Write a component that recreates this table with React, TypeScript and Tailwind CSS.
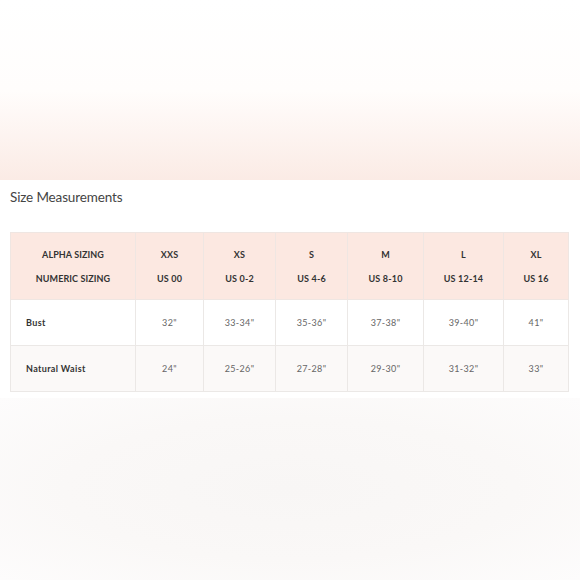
const sizes = [
  { alpha: 'XXS', numeric: 'US 00', bust: '32"', waist: '24"' },
  { alpha: 'XS', numeric: 'US 0-2', bust: '33-34"', waist: '25-26"' },
  { alpha: 'S', numeric: 'US 4-6', bust: '35-36"', waist: '27-28"' },
  { alpha: 'M', numeric: 'US 8-10', bust: '37-38"', waist: '29-30"' },
  { alpha: 'L', numeric: 'US 12-14', bust: '39-40"', waist: '31-32"' },
  { alpha: 'XL', numeric: 'US 16', bust: '41"', waist: '33"' },
];

const colWidths = ['w-[68px]', 'w-[72px]', 'w-[72px]', 'w-[76px]', 'w-[80px]', 'w-[65px]'];

export default function App() {
  return (
    <div className="w-[580px] h-[580px] bg-white font-['Lato','Liberation_Sans',sans-serif] overflow-hidden">
      {/* Soft pink band */}
      <div className="h-[180px] bg-gradient-to-b from-white via-[#fffdfc] to-[#fbebe5]" />

      {/* Size chart */}
      <section className="h-[218px] px-[10px] pt-[7px]">
        <h2 className="text-[13.5px] leading-5 text-[#444] font-normal tracking-[-0.01em]">Size Measurements</h2>

        <table className="mt-[25px] w-[558px] table-fixed border-collapse text-[9px] text-[#333]">
          <colgroup>
            <col className="w-[125px]" />
            {colWidths.map((w, i) => (
              <col key={i} className={w} />
            ))}
          </colgroup>
          <thead>
            <tr className="bg-[#fce8e1] h-[67px]">
              <th className="border border-[#efe6e2] font-bold tracking-[0.01em] align-middle pt-[2px]">
                <div className="leading-[24px]">ALPHA SIZING</div>
                <div className="leading-[24px]">NUMERIC SIZING</div>
              </th>
              {sizes.map((s) => (
                <th key={s.alpha} className="border border-[#efe6e2] font-bold tracking-[0.02em] align-middle pt-[2px]">
                  <div className="leading-[24px]">{s.alpha}</div>
                  <div className="leading-[24px]">{s.numeric}</div>
                </th>
              ))}
            </tr>
          </thead>
          <tbody>
            <tr className="bg-white h-[46px]">
              <td className="border border-[#ebe8e6] pl-[15px] font-bold tracking-[0.04em]">Bust</td>
              {sizes.map((s) => (
                <td key={s.alpha} className="border border-[#ebe8e6] text-center text-[#666] tracking-[0.04em]">
                  {s.bust}
                </td>
              ))}
            </tr>
            <tr className="bg-[#fbf9f8] h-[46px]">
              <td className="border border-[#ebe8e6] pl-[15px] font-bold tracking-[0.04em]">Natural Waist</td>
              {sizes.map((s) => (
                <td key={s.alpha} className="border border-[#ebe8e6] text-center text-[#666] tracking-[0.04em]">
                  {s.waist}
                </td>
              ))}
            </tr>
          </tbody>
        </table>
      </section>

      {/* Soft grey band */}
      <div className="h-[182px] bg-[radial-gradient(ellipse_at_center,#f8f6f5_0%,#faf8f7_55%,#fdfcfc_100%)]" />
    </div>
  );
}
